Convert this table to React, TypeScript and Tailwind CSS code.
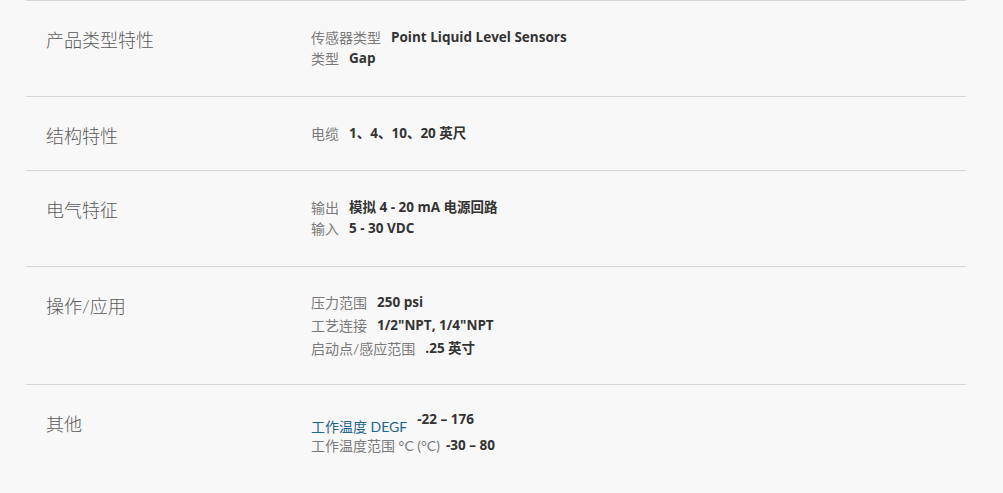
import React from "react";

type Spec = { label: string; value: string };

type Section = {
    title: string;
    specs: Spec[];
    rowClass: string;
    lineClass: string;
};

const sections: Section[] = [
    {
        title: "产品类型特性",
        specs: [
            {label: "传感器类型", value: "Point Liquid Level Sensors"},
            {label: "类型", value: "Gap"},
        ],
        rowClass: "h-[96px]",
        lineClass: "h-[21px]",
    },
    {
        title: "结构特性",
        specs: [{label: "电缆", value: "1、4、10、20 英尺"}],
        rowClass: "h-[74px]",
        lineClass: "h-[21px]",
    },
    {
        title: "电气特征",
        specs: [
            {label: "输出", value: "模拟 4 - 20 mA 电源回路"},
            {label: "输入", value: "5 - 30 VDC"},
        ],
        rowClass: "h-[96px]",
        lineClass: "h-[21px]",
    },
    {
        title: "操作/应用",
        specs: [
            {label: "压力范围", value: "250 psi"},
            {label: "工艺连接", value: '1/2"NPT, 1/4"NPT'},
            {label: "启动点/感应范围", value: ".25 英寸"},
        ],
        rowClass: "h-[118px]",
        lineClass: "h-[23px]",
    },
];

const valueFont = {fontFamily: '"Open Sans", "Noto Sans CJK SC", sans-serif'};

function SpecLine({spec, lineClass}: { spec: Spec; lineClass: string }) {
    return (
        <div className={`flex items-center ${lineClass}`}>
            <span className="mr-[10px] text-[14px] text-[#7a7a7a]">{spec.label}</span>
            <span className="text-[13.5px] font-bold text-[#333333]" style={valueFont}>{spec.value}</span>
        </div>
    );
}

export default function App() {
    return (
        <div
            className="min-h-[493px] w-full bg-[#f8f8f8] px-[26px]"
            style={{fontFamily: 'Lato, "Noto Sans CJK SC", sans-serif'}}
        >
            <div className="w-[940px]">
                {sections.map((section) => (
                    <div
                        key={section.title}
                        className={`flex border-t border-[#d6d6d6] ${section.rowClass}`}
                    >
                        <h3 className="w-[285px] shrink-0 pl-[20px] pt-[29px] text-[18px] font-light leading-[21px] text-[#5a5a5a]">
                            {section.title}
                        </h3>
                        <div className={section.title === "操作/应用" ? "pt-[24px]" : "pt-[26px]"}>
                            {section.specs.map((spec) => (
                                <SpecLine key={spec.label} spec={spec} lineClass={section.lineClass}/>
                            ))}
                        </div>
                    </div>
                ))}

                <div className="flex h-[109px] border-t border-[#d6d6d6]">
                    <h3 className="w-[285px] shrink-0 pl-[20px] pt-[29px] text-[18px] font-light leading-[21px] text-[#5a5a5a]">
                        其他
                    </h3>
                    <div className="pt-[26px]">
                        <div className="flex h-[24px] items-start">
                            <span className="mr-[10px] mt-[8px] text-[14px] leading-[16px] text-[#23648f]">
                                工作温度 DEGF
                            </span>
                            <span className="text-[13.5px] font-bold leading-[16px] text-[#333333]" style={valueFont}>
                                -22 – 176
                            </span>
                        </div>
                        <div className="flex h-[21px] items-center">
                            <span className="mr-[6px] text-[14px] text-[#7a7a7a]">工作温度范围 °C (°C)</span>
                            <span className="text-[13.5px] font-bold text-[#333333]" style={valueFont}>-30 – 80</span>
                        </div>
                    </div>
                </div>
            </div>
        </div>
    );
}
